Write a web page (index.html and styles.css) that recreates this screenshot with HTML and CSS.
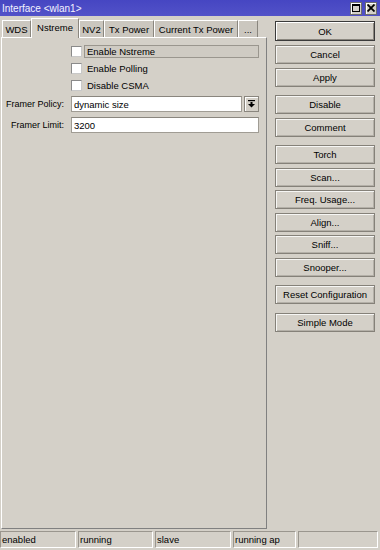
FILE: index.html
```html
<!DOCTYPE html>
<html>
<head>
<meta charset="utf-8">
<link rel="stylesheet" href="styles.css">
</head>
<body>
<div class="window">
  <div class="titlebar">
    <span class="title">Interface &lt;wlan1&gt;</span>
    <div class="winbtns">
      <span class="winbtn"><svg width="8" height="8" viewBox="0 0 8 8"><rect x="0.5" y="0.5" width="7" height="7" fill="none" stroke="#000"/><rect x="0" y="0" width="8" height="2" fill="#000"/></svg></span>
      <span class="winbtn"><svg width="8" height="8" viewBox="0 0 8 8"><path d="M0.5 0.5L7.5 7.5M7.5 0.5L0.5 7.5" stroke="#000" stroke-width="1.8"/></svg></span>
    </div>
  </div>
  <div class="main">
    <div class="left">
      <div class="tabs">
        <div class="tab t-wds">WDS</div>
        <div class="tab active t-nst">Nstreme</div>
        <div class="tab t-nv2">NV2</div>
        <div class="tab t-txp">Tx Power</div>
        <div class="tab t-ctp">Current Tx Power</div>
        <div class="tab t-more">...</div>
      </div>
      <div class="panel">
        <div class="checkrow"><span class="cb"></span><span class="cblabel focus">Enable Nstreme</span></div>
        <div class="checkrow"><span class="cb"></span><span class="cblabel">Enable Polling</span></div>
        <div class="checkrow"><span class="cb"></span><span class="cblabel">Disable CSMA</span></div>
        <div class="field first">
          <span class="flabel">Framer Policy:</span>
          <span class="input narrow">dynamic size</span>
          <span class="dd"><svg width="7" height="8" viewBox="0 0 7 8"><rect x="0" y="0" width="7" height="1.2" fill="#000"/><rect x="2.5" y="2" width="2" height="2.5" fill="#000"/><polygon points="0,4 7,4 3.5,7.5" fill="#000"/></svg></span>
        </div>
        <div class="field second">
          <span class="flabel">Framer Limit:</span>
          <span class="input wide">3200</span>
        </div>
      </div>
    </div>
    <div class="right">
      <div class="btn default">OK</div>
      <div class="btn">Cancel</div>
      <div class="btn">Apply</div>
      <div class="btn grp">Disable</div>
      <div class="btn">Comment</div>
      <div class="btn grp">Torch</div>
      <div class="btn">Scan...</div>
      <div class="btn">Freq. Usage...</div>
      <div class="btn">Align...</div>
      <div class="btn">Sniff...</div>
      <div class="btn">Snooper...</div>
      <div class="btn grp">Reset Configuration</div>
      <div class="btn grp">Simple Mode</div>
    </div>
  </div>
  <div class="status">
    <div class="cell c1">enabled</div>
    <div class="cell c2">running</div>
    <div class="cell c3">slave</div>
    <div class="cell c4">running ap</div>
    <div class="cell c5"></div>
  </div>
</div>
</body>
</html>
```
FILE: styles.css
```css
* { box-sizing: border-box; }
html, body { margin: 0; padding: 0; }
body {
  width: 380px;
  height: 550px;
  background: #d4d0c8;
  font-family: "Liberation Sans", Arial, sans-serif;
  font-size: 9.5px;
  color: #000;
  overflow: hidden;
}
.window { width: 380px; height: 550px; display: flex; flex-direction: column; }
.titlebar {
  height: 16px;
  background: linear-gradient(#4646c2, #5252c8);
  display: flex;
  align-items: center;
  justify-content: space-between;
  padding: 0 3px 0 2px;
}
.title { color: #f2f2ff; font-size: 10px; }
.winbtns { display: flex; gap: 3px; }
.winbtn {
  width: 12px; height: 13px;
  background: #d4d0c8;
  border: 1px solid #6e6e6e;
  box-shadow: inset 1px 1px #fff;
  display: flex; align-items: center; justify-content: center;
}
.main { flex: 1; display: flex; }
.left { width: 267px; display: flex; flex-direction: column; padding-left: 1px; padding-bottom: 1px; }
.tabs { height: 21px; display: flex; align-items: flex-end; padding-left: 1px; }
.tab {
  height: 17px;
  background: #cbc7bf;
  border-top: 1px solid #fff;
  border-left: 1px solid #fff;
  border-right: 1px solid #8a867e;
  display: flex; align-items: center; justify-content: center;
  white-space: nowrap;
}
.tab.active {
  height: 20px;
  background: #d4d0c8;
  margin-bottom: -1px;
  position: relative;
  z-index: 1;
  padding-bottom: 2px;
}
.t-wds { width: 29px; }
.t-nst { width: 48px; }
.t-nv2 { width: 25px; }
.t-txp { width: 50px; }
.t-ctp { width: 84px; }
.t-more { width: 20px; }
.panel {
  flex: 1;
  border-top: 1px solid #fff;
  border-left: 1px solid #fff;
  border-right: 1px solid #808080;
  border-bottom: 1px solid #808080;
  padding-top: 5px;
}
.checkrow { height: 17px; display: flex; align-items: center; padding-left: 69px; }
.cb {
  width: 11px; height: 11px;
  background: #fff;
  border: 1px solid #8a8a8a;
  border-right-color: #c8c8c8;
  border-bottom-color: #c8c8c8;
}
.cblabel {
  margin-left: 2px;
  width: 175px;
  height: 13px;
  padding-left: 2px;
  display: flex; align-items: center;
  border: 1px solid transparent;
}
.cblabel.focus { border-color: #9a968e; background: #cfcbc3; }
.field { display: flex; align-items: center; }
.field.first { margin-top: 2px; }
.field.second { margin-top: 5px; }
.flabel { width: 62px; text-align: right; margin-right: 7px; font-size: 9px; }
.input {
  height: 16px;
  background: #fff;
  border: 1px solid #a09c94;
  border-top-color: #8a867e;
  padding-left: 2px;
  display: flex; align-items: center;
}
.input.narrow { width: 171px; }
.input.wide { width: 188px; }
.dd {
  width: 15px; height: 16px;
  margin-left: 2px;
  border: 1px solid #8a867e;
  box-shadow: inset 1px 1px #fff;
  display: flex; align-items: center; justify-content: center;
}
.right { flex: 1; padding: 5px 0 0 8px; display: flex; flex-direction: column; }
.btn {
  width: 100px; height: 19px;
  margin-bottom: 3.5px;
  border: 1px solid #858179;
  box-shadow: inset 1px 1px #f6f6f4, inset -1px -1px #b4b0a8;
  display: flex; align-items: center; justify-content: center;
  white-space: nowrap;
}
.btn.default { height: 20px; margin-bottom: 4px; border-color: #3a3a3a; box-shadow: inset 1px 1px #fff, inset -1px -1px #8a867e; }
.btn.grp { margin-top: 5px; }
.status { height: 20px; display: flex; gap: 2px; padding-top: 1px; }
.cell {
  height: 17px;
  border: 1px solid;
  border-color: #9a968e #fff #fff #9a968e;
  padding-left: 1px;
  display: flex; align-items: center;
  white-space: nowrap;
}
.c1 { width: 76px; }
.c2 { width: 75px; }
.c3 { width: 76px; }
.c4 { width: 63px; }
.c5 { width: 80px; }
```
